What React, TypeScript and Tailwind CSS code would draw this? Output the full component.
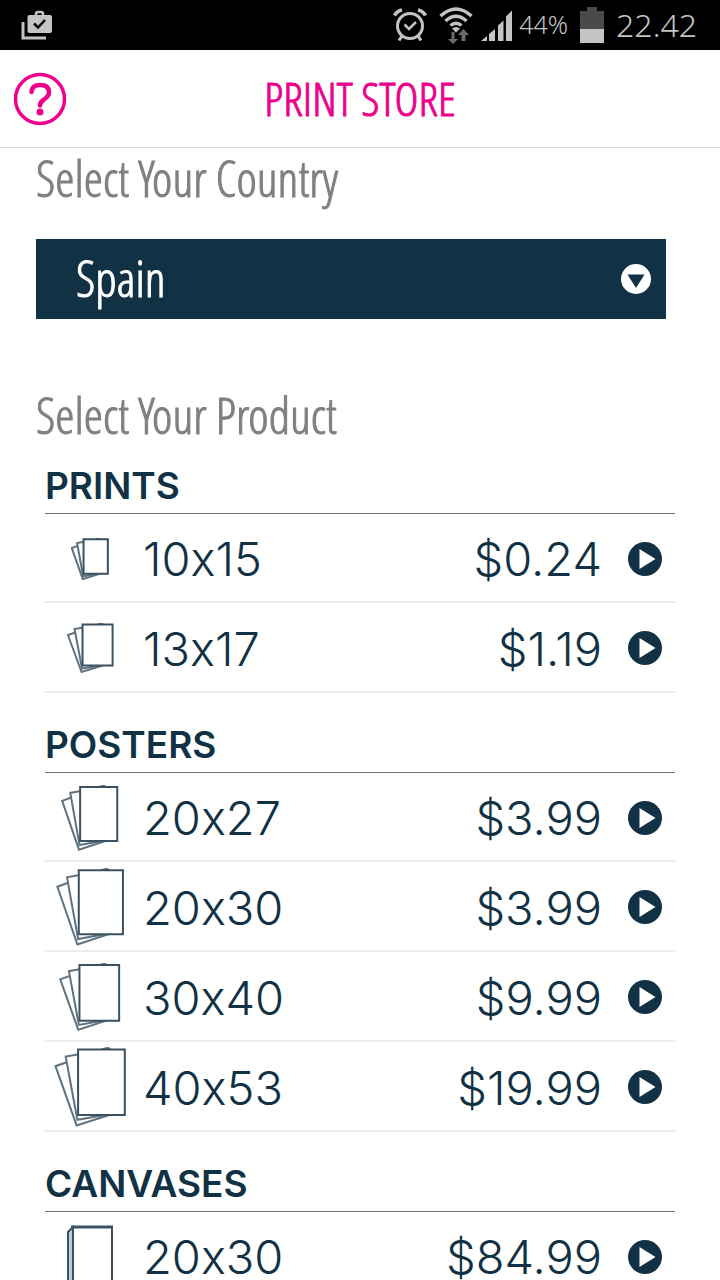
import { useState } from "react";

type Product = {
  size: string;
  price: string;
  w: number;
  h: number;
};

type Section = {
  title: string;
  kind: "sheets" | "canvas";
  products: Product[];
};

const sections: Section[] = [
  {
    title: "PRINTS",
    kind: "sheets",
    products: [
      { size: "10x15", price: "$0.24", w: 38, h: 42 },
      { size: "13x17", price: "$1.19", w: 47, h: 50 },
    ],
  },
  {
    title: "POSTERS",
    kind: "sheets",
    products: [
      { size: "20x27", price: "$3.99", w: 58, h: 66 },
      { size: "20x30", price: "$3.99", w: 69, h: 78 },
      { size: "30x40", price: "$9.99", w: 62, h: 68 },
      { size: "40x53", price: "$19.99", w: 73, h: 80 },
    ],
  },
  {
    title: "CANVASES",
    kind: "canvas",
    products: [{ size: "20x30", price: "$84.99", w: 48, h: 64 }],
  },
];

const countries = ["Spain", "France", "Germany", "Italy", "Portugal"];

// three fanned sheets, the front one upright
function SheetsIcon({ w, h }: { w: number; h: number }) {
  const p = (x: number, y: number) => `${x * w} ${y * h}`;
  return (
    <svg width={w} height={h} fill="white" stroke="#5f7280" strokeWidth="2">
      <path d={`M${p(0.65, 0.03)} L${p(0.74, 0.01)} L${p(0.77, 0.03)}`} />
      <path
        d={`M${p(0.33, 0.14)} L${p(0.02, 0.24)} L${p(0.31, 0.98)} L${p(0.79, 0.84)}`}
      />
      <path
        d={`M${p(0.34, 0.09)} L${p(0.16, 0.12)} L${p(0.32, 0.91)} L${p(0.7, 0.85)}`}
      />
      <path
        stroke="#3a5161"
        d={`M${p(0.33, 0.03)} L${p(0.97, 0.03)} L${p(0.97, 0.85)} L${p(0.33, 0.85)} Z`}
      />
    </svg>
  );
}

function CanvasIcon({ w, h }: { w: number; h: number }) {
  return (
    <svg width={w} height={h} viewBox="0 0 48 64" fill="none">
      <path
        d="M7 2 L2 7 V62 H7 Z"
        fill="#b9cbdc"
        stroke="#3d5161"
        strokeWidth="2"
      />
      <path d="M7 2 H46 V62 H7 Z" fill="white" stroke="#3a5161" strokeWidth="2" />
      <path d="M5 2 H47" stroke="#3a5161" strokeWidth="3" />
    </svg>
  );
}

function PlayIcon() {
  return (
    <svg width="34" height="34" viewBox="0 0 34 34">
      <circle cx="17" cy="17" r="17" fill="#113145" />
      <path d="M11.5 7 L27.5 17 L11.5 27 Z" fill="white" />
    </svg>
  );
}

function StatusBar() {
  return (
    <div className="flex h-[50px] shrink-0 items-center justify-between bg-black pr-[23px] pl-[21px] font-['Noto_Sans',sans-serif] text-[#c4c4c4]">
      <svg width="32" height="30" viewBox="0 0 32 30">
        <path d="M2 12 V28 H25" fill="none" stroke="#c4c4c4" strokeWidth="3" />
        <path
          d="M15 5 V4 Q15 2 17 2 H20 Q22 2 22 4 V5"
          fill="none"
          stroke="#c4c4c4"
          strokeWidth="2.5"
        />
        <rect x="6.5" y="5" width="24.5" height="18" rx="2" fill="#c4c4c4" />
        <path
          d="M13 13.5 L17 17.5 L24 10"
          fill="none"
          stroke="black"
          strokeWidth="2.5"
        />
      </svg>
      <div className="flex items-center">
        {/* alarm */}
        <svg width="34" height="36" viewBox="0 0 34 36" fill="none" stroke="#c4c4c4">
          <circle cx="17" cy="19" r="12.5" strokeWidth="3" />
          <path d="M11.5 17.5 L16 22 L23 15" strokeWidth="2.5" />
          <path d="M1.5 8.5 Q4 4 9 3 M25 3 Q30 4 32.5 8.5" strokeWidth="3.5" />
          <path d="M9 29 L6 33.5 M25 29 L28 33.5" strokeWidth="3" />
        </svg>
        {/* wifi with traffic arrows */}
        <svg
          className="ml-3"
          width="34"
          height="38"
          viewBox="0 0 34 38"
          fill="none"
          stroke="#c4c4c4"
          strokeWidth="3.5"
        >
          <path d="M1.5 10 Q17 -4 32.5 10" />
          <path d="M6.5 15 Q17 5.5 27.5 15" />
          <path d="M11.5 19.5 Q17 15 22.5 19.5" />
          <path d="M13 22.5 Q17 19.5 21 22.5 L17 26.5 Z" fill="#c4c4c4" stroke="none" />
          <path
            d="M12.500 26 H15.500 V33 H19 L14 38 L9 33 H12.500 Z M22.500 35 V29 H19 L24.500 23 L30 29 H26.500 V35 Z"
            fill="#6b6b6b"
            stroke="none"
          />
        </svg>
        <svg className="ml-2" width="34" height="36" viewBox="0 0 34 36" fill="#c4c4c4">
          <path d="M0 34 L6 29 V34 Z M8 27 L14 22 V34 H8 Z M17 18.5 L22.5 13.5 V34 H17 Z M25 9.5 L31 3.5 V34 H25 Z" />
        </svg>
        <span className="ml-1 text-[25px] font-light">44%</span>
        <svg className="ml-3" width="24" height="36" viewBox="0 0 24 36">
          <path d="M7 0 H17 V4 H24 V36 H0 V4 H7 Z" fill="#4a4a4a" />
          <path d="M0 22 H24 V36 H0 Z" fill="#c4c4c4" />
        </svg>
        <span className="ml-3 text-[32px] font-light">22.42</span>
      </div>
    </div>
  );
}

export default function App() {
  const [country, setCountry] = useState<string>("Spain");

  return (
    <div className="flex h-screen flex-col bg-white font-['Inter',sans-serif] text-[#113145]">
      <StatusBar />

      <header className="grid h-[98px] shrink-0 grid-cols-[1fr_auto_1fr] items-center border-b border-[#dcdcdc] px-[13px]">
        <button type="button" aria-label="Help" className="w-[54px]">
          <svg width="54" height="54" viewBox="0 0 54 54" fill="none" stroke="#ec008c">
            <circle cx="27" cy="27" r="24.5" strokeWidth="3.5" />
            <path
              d="M18.5 20 Q19 13 27 13 Q36 13 36 20.5 Q36 24 31 27.5 Q27 30 27 33.5"
              strokeWidth="4.5"
              strokeLinecap="round"
            />
            <circle cx="27" cy="40" r="3.5" fill="#ec008c" stroke="none" />
          </svg>
        </button>
        <h1 className="font-['Open_Sans_Condensed_Light','Open_Sans_Condensed',sans-serif] text-[46px] font-light text-[#ec008c] [-webkit-text-stroke:1px]">
          PRINT STORE
        </h1>
      </header>

      <main className="min-h-0 flex-1 overflow-y-auto pr-[45px] pl-9 [scrollbar-width:none]">
        <label
          htmlFor="country"
          className="block h-[91px] font-['Open_Sans_Condensed_Light','Open_Sans_Condensed',sans-serif] text-[49px] leading-[60px] font-light text-[#808080] [-webkit-text-stroke:1px]"
        >
          Select Your Country
        </label>
        <div className="relative mr-[9px]">
          <select
            id="country"
            value={country}
            onChange={(e) => setCountry(e.target.value)}
            className="block h-20 w-full appearance-none bg-[#113145] px-10 font-['Open_Sans_Condensed_Light','Open_Sans_Condensed',sans-serif] text-[49px] font-light text-white [-webkit-text-stroke:1px]"
          >
            {countries.map((c) => (
              <option key={c}>{c}</option>
            ))}
          </select>
          <svg
            className="pointer-events-none absolute top-[25px] right-[15px]"
            width="30"
            height="30"
            viewBox="0 0 30 30"
          >
            <circle cx="15" cy="15" r="15" fill="white" />
            <path d="M6.5 10.5 H23.5 L15 24 Z" fill="#113145" />
          </svg>
        </div>

        <h2 className="mt-[66px] h-[49px] font-['Open_Sans_Condensed_Light','Open_Sans_Condensed',sans-serif] text-[49px] leading-[60px] font-light text-[#808080] [-webkit-text-stroke:1px]">
          Select Your Product
        </h2>

        <div className="pl-[9px]">
          {sections.map((section) => (
            <section key={section.title}>
              <h3 className="h-20 border-b border-[#6f6f6f] pt-7 text-[37px] leading-[48px] font-semibold">
                {section.title}
              </h3>
              <ul className="text-[47px] leading-none font-light [font-variant-ligatures:no-contextual]">
                {section.products.map((product) => (
                  <li
                    key={product.size}
                    className="h-[90px] border-b-2 border-[#ececec] first:h-[89px]"
                  >
                    <button
                      type="button"
                      className="flex h-full w-full cursor-pointer items-center pt-[2px] pr-[13px]"
                    >
                      <span className="flex w-[90px] justify-center">
                        {section.kind === "sheets" ? (
                          <SheetsIcon w={product.w} h={product.h} />
                        ) : (
                          <CanvasIcon w={product.w} h={product.h} />
                        )}
                      </span>
                      <span className="ml-2">{product.size}</span>
                      <span className="mr-[26px] ml-auto">{product.price}</span>
                      <PlayIcon />
                    </button>
                  </li>
                ))}
              </ul>
            </section>
          ))}
        </div>
      </main>
    </div>
  );
}
